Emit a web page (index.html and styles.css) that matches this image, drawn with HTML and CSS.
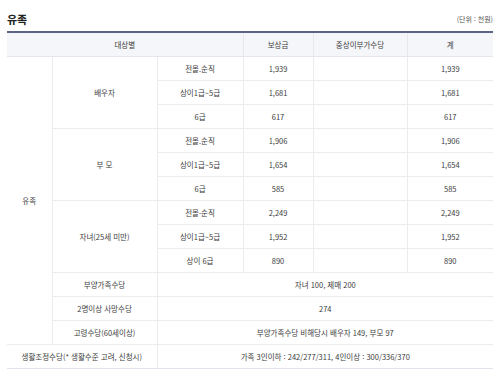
FILE: index.html
```html
<!DOCTYPE html>
<html lang="ko">
<head>
  <meta charset="UTF-8" />
  <meta name="viewport" content="width=device-width, initial-scale=1.0" />
  <title>유족 보상금</title>
  <link rel="stylesheet" href="styles.css">
</head>
<body>
  <div class="title-row">
    <h2>유족</h2>
    <span class="unit">(단위 : 천원)</span>
  </div>

  <table class="pay-table">
    <colgroup>
      <col class="c1">
      <col class="c2">
      <col class="c3">
      <col class="c4">
      <col class="c5">
      <col class="c6">
    </colgroup>
    <thead>
      <tr>
        <th colspan="3">대상별</th>
        <th>보상금</th>
        <th>중상이부가수당</th>
        <th>계</th>
      </tr>
    </thead>
    <tbody>
      <tr>
        <td rowspan="12">유족</td>
        <td rowspan="3" class="group">배우자</td>
        <td>전몰.순직</td><td>1,939</td><td></td><td>1,939</td>
      </tr>
      <tr><td>상이1급~5급</td><td>1,681</td><td></td><td>1,681</td></tr>
      <tr><td>6급</td><td>617</td><td></td><td>617</td></tr>
      <tr>
        <td rowspan="3" class="group">부 모</td>
        <td>전몰.순직</td><td>1,906</td><td></td><td>1,906</td>
      </tr>
      <tr><td>상이1급~5급</td><td>1,654</td><td></td><td>1,654</td></tr>
      <tr><td>6급</td><td>585</td><td></td><td>585</td></tr>
      <tr>
        <td rowspan="3" class="group">자녀(25세 미만)</td>
        <td>전몰·순직</td><td>2,249</td><td></td><td>2,249</td>
      </tr>
      <tr><td>상이1급~5급</td><td>1,952</td><td></td><td>1,952</td></tr>
      <tr><td>상이 6급</td><td>890</td><td></td><td>890</td></tr>
      <tr><td>부양가족수당</td><td colspan="4">자녀 100, 제매 200</td></tr>
      <tr><td>2명이상 사망수당</td><td colspan="4">274</td></tr>
      <tr><td>고령수당(60세이상)</td><td colspan="4">부양가족수당 비해당시 배우자 149, 부모 97</td></tr>
      <tr class="last">
        <td colspan="2">생활조정수당(* 생활수준 고려, 신청시)</td>
        <td colspan="4">가족 3인이하 : 242/277/311, 4인이상 : 300/336/370</td>
      </tr>
    </tbody>
  </table>
</body>
</html>
```

FILE: styles.css
```css
* {
  box-sizing: border-box;
  margin: 0;
  padding: 0;
}

body {
  background: #ffffff;
  color: #3c3c3c;
  font-family: "Noto Sans CJK KR", "Noto Sans", sans-serif;
  padding: 7px 7px 0 7px;
}

.title-row {
  display: flex;
  justify-content: space-between;
  align-items: center;
  height: 24px;
}

.title-row h2 {
  font-size: 11px;
  font-weight: bold;
  color: #222222;
}

.unit {
  font-size: 7px;
  color: #555555;
}

.pay-table {
  width: 486px;
  table-layout: fixed;
  border-collapse: collapse;
  font-size: 7.5px;
  text-align: center;
}

.c1 { width: 45px; }
.c2 { width: 105px; }
.c3 { width: 86px; }
.c4 { width: 70px; }
.c5 { width: 94px; }
.c6 { width: 86px; }

.pay-table th {
  height: 24px;
  background: #f5f6fa;
  border-top: 2px solid #5b6482;
  border-bottom: 1px solid #e4e6ee;
  border-left: 1px solid #e8e8ec;
  font-weight: normal;
}

.pay-table td {
  height: 24px;
  border: 1px solid #ececec;
  padding: 0 2px;
}

.pay-table th:first-child,
.pay-table tbody tr:first-child td:first-child,
.pay-table .last td:first-child {
  border-left: none;
}

.pay-table th:last-child,
.pay-table td:last-child {
  border-right: none;
}

.pay-table .last td {
  border-top: 1px solid #dcdce4;
  border-bottom: 1px solid #e2e2ec;
}
```
